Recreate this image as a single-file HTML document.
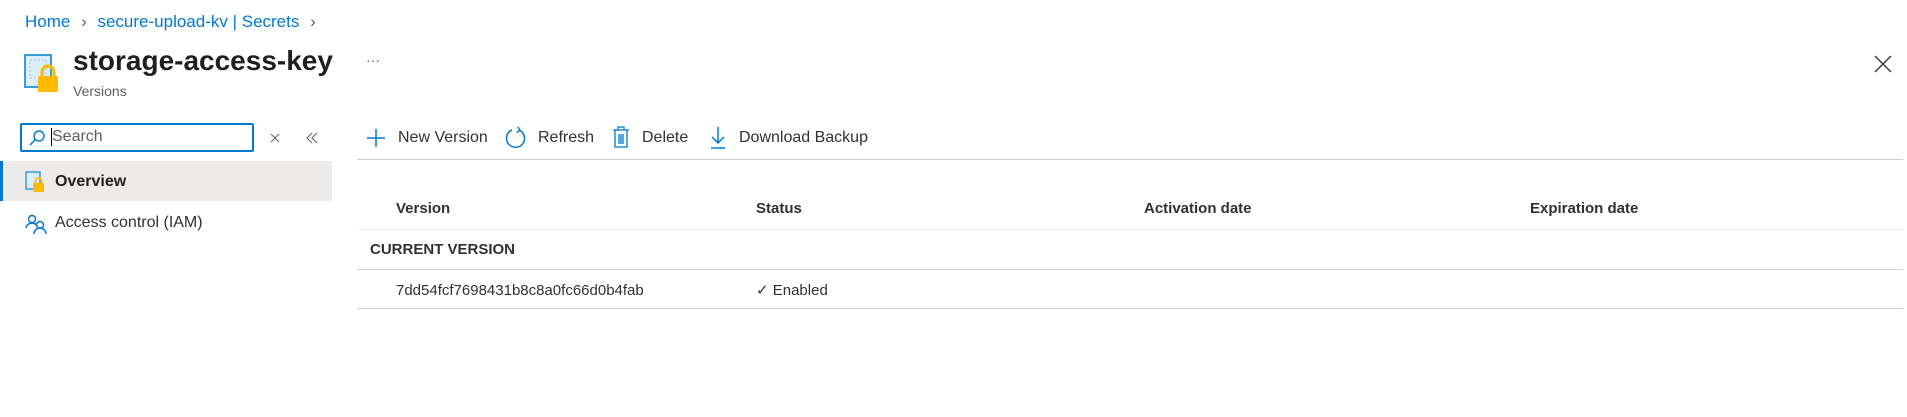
<!DOCTYPE html>
<html><head><meta charset="utf-8"><style>
*{box-sizing:border-box;margin:0;padding:0}
body{width:1907px;height:417px;background:#fff;font-family:"Liberation Sans",sans-serif;color:#323130;position:relative;overflow:hidden;font-size:16px}
.a{position:absolute;white-space:nowrap}
.blue{color:#0078d4}
.b{font-weight:bold}
.hl{position:absolute;left:357px;width:1546px;height:1px;background:#e1dfdd}
</style></head><body>
<div class="a blue" style="left:25px;top:12px;font-size:17px">Home <span style="color:#605e5c;margin:0 6px">›</span> secure-upload-kv | Secrets <span style="color:#605e5c;margin-left:6px">›</span></div>
<svg class="a" style="left:24px;top:54px" width="36" height="40" viewBox="0 0 36 40">
<rect x="1" y="1" width="26" height="32" fill="#dceefa" stroke="#3b9ad9" stroke-width="2"/>
<rect x="6" y="6" width="16" height="18" fill="none" stroke="#a9c3d8" stroke-dasharray="2 2"/>
<rect x="14" y="22" width="20" height="16" rx="2" fill="#ffb900"/>
<path d="M18 22v-4a6 6 0 0 1 12 0v4" fill="none" stroke="#ffb900" stroke-width="3"/>
</svg>
<div class="a b" style="left:73px;top:45px;font-size:28px;color:#201f1e">storage-access-key</div>
<div class="a" style="left:366px;top:52px;color:#605e5c;font-size:14px">···</div>
<div class="a" style="left:73px;top:83px;font-size:14px;color:#605e5c">Versions</div>
<svg class="a" style="left:1874px;top:55px" width="18" height="18"><path d="M1 1L17 17M17 1L1 17" stroke="#323130" stroke-width="1.3"/></svg>

<div class="a" style="left:20px;top:123px;width:234px;height:29px;border:2px solid #0078d4;border-radius:2px"></div>
<svg class="a" style="left:28px;top:129px" width="18" height="18" viewBox="0 0 18 18"><circle cx="11" cy="7" r="5" fill="none" stroke="#0078d4" stroke-width="1.4"/><path d="M7.5 10.5L2 16" stroke="#0078d4" stroke-width="1.5"/></svg>
<div class="a" style="left:51px;top:128px;width:1px;height:18px;background:#000"></div>
<div class="a" style="left:52px;top:128px;color:#605e5c">Search</div>
<svg class="a" style="left:270px;top:133px" width="10" height="10"><path d="M1 1L9 9M9 1L1 9" stroke="#605e5c" stroke-width="1"/></svg>
<svg class="a" style="left:306px;top:132px" width="12" height="12"><path d="M6 1L1 6L6 11M11 1L6 6L11 11" fill="none" stroke="#605e5c" stroke-width="1"/></svg>

<div class="a" style="left:0;top:161px;width:332px;height:40px;background:#edebe9"></div>
<div class="a" style="left:0;top:161px;width:3px;height:40px;background:#0078d4"></div>
<svg class="a" style="left:25px;top:171px" width="22" height="22" viewBox="0 0 22 22"><rect x="1" y="1" width="14" height="17" fill="#dceefa" stroke="#3b9ad9" stroke-width="1.5"/><rect x="8" y="12" width="11" height="9" rx="1" fill="#ffb900"/><path d="M10.5 12v-2a3 3 0 0 1 6 0v2" fill="none" stroke="#ffb900" stroke-width="1.8"/></svg>
<div class="a b" style="left:55px;top:173px;color:#201f1e">Overview</div>
<svg class="a" style="left:25px;top:213px" width="22" height="22" viewBox="0 0 22 22"><circle cx="7" cy="6" r="3.5" fill="none" stroke="#0078d4" stroke-width="1.5"/><path d="M1 15a6 6 0 0 1 11 -2" fill="none" stroke="#0078d4" stroke-width="1.5"/><circle cx="15" cy="12" r="3.5" fill="none" stroke="#0078d4" stroke-width="1.5"/><path d="M9 21a6 6 0 0 1 12 0" fill="none" stroke="#0078d4" stroke-width="1.5"/></svg>
<div class="a" style="left:55px;top:214px">Access control (IAM)</div>

<svg class="a" style="left:366px;top:128px" width="20" height="20"><path d="M10 1v18M1 10h18" stroke="#0078d4" stroke-width="1.5"/></svg>
<div class="a" style="left:398px;top:129px">New Version</div>
<svg class="a" style="left:505px;top:126px" width="22" height="24" viewBox="0 0 22 24"><path d="M7 4A9 9 0 1 0 14 4" fill="none" stroke="#0078d4" stroke-width="1.5"/><path d="M13 1l2 3.5-3.5 2" fill="none" stroke="#0078d4" stroke-width="1.5"/></svg>
<div class="a" style="left:538px;top:129px">Refresh</div>
<svg class="a" style="left:612px;top:126px" width="18" height="22" viewBox="0 0 18 22"><path d="M1 4h16M6 4V1h6v3M3 4v17h12V4M7 8v10M9 8v10M11 8v10" fill="none" stroke="#0078d4" stroke-width="1.3"/></svg>
<div class="a" style="left:642px;top:129px">Delete</div>
<svg class="a" style="left:709px;top:126px" width="18" height="24" viewBox="0 0 18 24"><path d="M9 1v16M3 11l6 6 6-6M2 22h14" fill="none" stroke="#0078d4" stroke-width="1.5"/></svg>
<div class="a" style="left:739px;top:129px">Download Backup</div>
<div class="hl" style="top:159px;background:#d2d0ce"></div>

<div class="a b" style="left:396px;top:200px;font-size:15px">Version</div>
<div class="a b" style="left:756px;top:200px;font-size:15px">Status</div>
<div class="a b" style="left:1144px;top:200px;font-size:15px">Activation date</div>
<div class="a b" style="left:1530px;top:200px;font-size:15px">Expiration date</div>
<div class="hl" style="top:229px;background:#edebe9"></div>
<div class="a b" style="left:370px;top:241px;font-size:15px">CURRENT VERSION</div>
<div class="hl" style="top:269px;background:#d2d0ce"></div>
<div class="a" style="left:396px;top:282px;font-size:15px">7dd54fcf7698431b8c8a0fc66d0b4fab</div>
<div class="a" style="left:756px;top:281px;font-size:15px">✓ Enabled</div>
<div class="hl" style="top:308px;background:#d2d0ce"></div>
</body></html>
